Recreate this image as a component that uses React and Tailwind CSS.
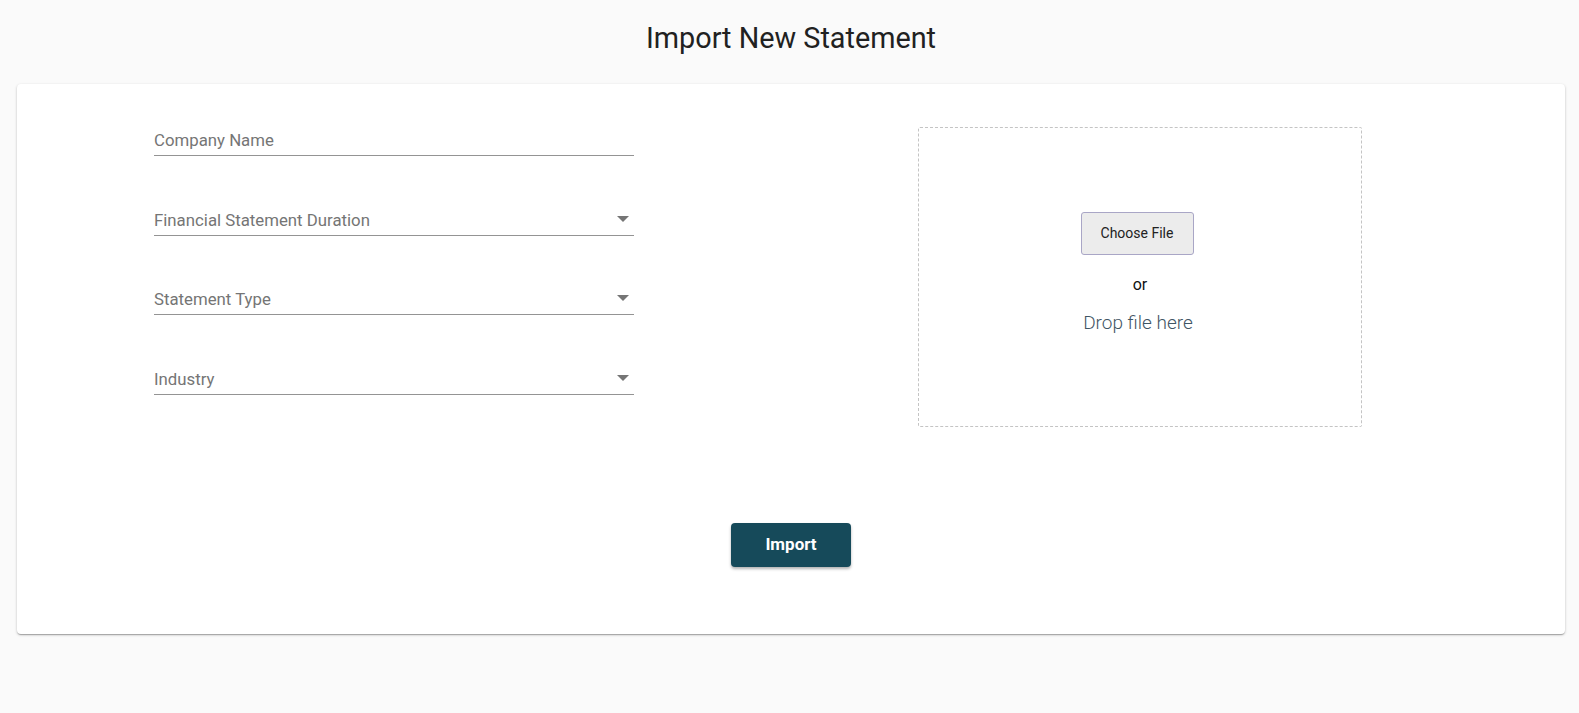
import React from "react";

const fields = [
  { label: "Company Name", select: false },
  { label: "Financial Statement Duration", select: true },
  { label: "Statement Type", select: true },
  { label: "Industry", select: true },
];

function Field({ label, select }) {
  return (
    <div className="relative h-[32px] border-b border-[#949494] flex items-end pb-[5px]">
      <span className="text-[16.8px] leading-[20px] text-[#757575]">{label}</span>
      {select && (
        <svg
          className="absolute right-[5px] top-[12px]"
          width="12"
          height="6"
          viewBox="0 0 12 6"
        >
          <path d="M0 0 L12 0 L6 6 Z" fill="#757575" />
        </svg>
      )}
    </div>
  );
}

export default function App() {
  return (
    <div
      className="min-h-[713px] bg-[#fafafa] pb-10"
      style={{ fontFamily: "Roboto, 'Liberation Sans', sans-serif" }}
    >
      {/* page title */}
      <h1 className="pt-[20px] pb-[28px] pl-[3px] text-center text-[28.8px] leading-[36px] font-normal text-[#212121]">
        Import New Statement
      </h1>

      <div className="ml-[17px] mr-[14px] bg-white rounded-[4px] shadow-[0_1px_3px_rgba(0,0,0,0.2),0_1px_1px_rgba(0,0,0,0.14),0_2px_1px_-1px_rgba(0,0,0,0.12)] pt-[40px] pb-[67px]">
        <div className="flex items-start">
          {/* form fields */}
          <div className="ml-[137px] w-[480px] flex flex-col gap-[47.5px]">
            {fields.map((f) => (
              <Field key={f.label} label={f.label} select={f.select} />
            ))}
          </div>

          {/* drop zone */}
          <div className="ml-[284px] mt-[3px] w-[444px] h-[300px] border border-dashed border-[#c4c4c4] rounded-[2px] flex flex-col items-center justify-center">
            <button className="mt-[-8px] mr-[6px] w-[113px] h-[43px] bg-[#ececec] border border-[#a9a6c6] rounded-[3px] text-[14px] text-[#222]">
              Choose File
            </button>
            <div className="mt-[20px] text-[16px] leading-[20px] text-[#111]">or</div>
            <div className="mt-[17px] mr-[4px] text-[19px] leading-[22px] font-light text-[#3f5564]">
              Drop file here
            </div>
          </div>
        </div>

        <div className="mt-[96px] flex justify-center">
          <button className="w-[120px] h-[44px] rounded-[4px] bg-[#164a5a] text-white text-[17px] font-bold shadow-[0_2px_3px_rgba(0,0,0,0.3)]">
            Import
          </button>
        </div>
      </div>
    </div>
  );
}
